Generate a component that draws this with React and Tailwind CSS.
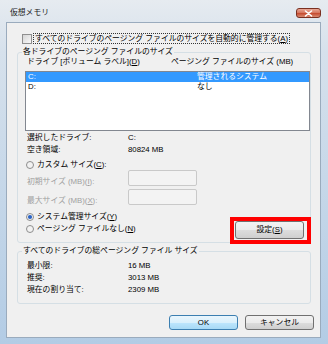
import React from 'react';

const Radio = ({ checked }) => (
  <svg width="8" height="8" viewBox="0 0 8 8" className="shrink-0">
    <circle cx="4" cy="4" r="3.5" fill="#f2f2f2" stroke="#8d8d8d" strokeWidth="1" />
    {checked && <circle cx="4" cy="4" r="2.1" fill="#2a63c4" />}
  </svg>
);

const U = ({ children }) => <span className="underline underline-offset-[1px]">{children}</span>;

const Button = ({ children, primary, className = '' }) => (
  <div
    className={`flex items-center justify-center w-[69px] rounded-[3px] border ${
      primary
        ? 'border-[#3c7fb1] bg-[linear-gradient(#eaf6fd,#d9f0fc_50%,#bee6fd_50%,#a7d9f5)]'
        : 'border-[#707070] bg-[linear-gradient(#f2f2f2,#ebebeb_50%,#dddddd_50%,#cfcfcf)]'
    } ${className}`}
  >
    {children}
  </div>
);

export default function App() {
  return (
    <div className="w-[328px] h-[344px] flex flex-col bg-[linear-gradient(180deg,#e6ebf0_0%,#d6e1ec_15%,#b3cce5_100%)] font-['Liberation_Sans','Noto_Sans_CJK_JP',sans-serif] text-[7.8px] text-black">
      {/* title bar */}
      <div className="h-[22px] flex items-start justify-between">
        <span className="pl-[10px] pt-[8px] leading-[10px] text-[#1b1b1b]">仮想メモリ</span>
        <div className="mt-[8px] mr-[7px] w-[25px] h-[10px] flex items-center justify-center rounded-[3px] border border-[#7a3021] bg-[linear-gradient(#e9a896,#d5735b_50%,#c4462a_50%,#d98a70)]">
          <svg width="9" height="7" viewBox="0 0 9 7">
            <path d="M1.5 1 L7.5 6 M7.5 1 L1.5 6" stroke="#fff" strokeWidth="1.6" strokeLinecap="round" />
          </svg>
        </div>
      </div>

      <div className="flex h-[316px]">
        <div className="w-[6px]" />
        <div className="w-[315px] h-[316px] border border-[#9aabbd] bg-[#f0f0f0] flex flex-col">
          {/* auto-manage checkbox */}
          <div className="ml-[15px] mt-[10px] flex items-center h-[11px]">
            <span className="w-[10px] h-[10px] border border-[#8f8f8f] bg-[linear-gradient(135deg,#d6d6d6,#f8f8f8)]" />
            <span className="ml-[1px] h-[11px] px-[1px] border border-dotted border-[#333] leading-[9px]">
              すべてのドライブのページング ファイルのサイズを自動的に管理する(<U>A</U>)
            </span>
          </div>

          {/* per-drive group */}
          <fieldset className="mt-[3px] ml-[10px] w-[294px] h-[196px] border border-[#d5dfe5] rounded-[3px]">
            <legend className="ml-[4px] px-[1px] leading-[10px]">各ドライブのページング ファイルのサイズ</legend>
            <div className="flex h-[10px] leading-[10px] ml-[9px]">
              <span className="w-[144px]">ドライブ [ボリューム ラベル](<U>D</U>)</span>
              <span>ページング ファイルのサイズ (MB)</span>
            </div>

            <div className="mt-[4px] ml-[7px] w-[285px] h-[60px] border border-[#828790] bg-white">
              <div className="flex h-[10px] leading-[10px] bg-[#3399ff] text-white pl-[2px]">
                <span className="w-[169px]">C:</span>
                <span>管理されるシステム</span>
              </div>
              <div className="flex h-[10px] leading-[10px] pl-[2px]">
                <span className="w-[169px]">D:</span>
                <span>なし</span>
              </div>
            </div>

            <div className="mt-[1px] ml-[9px] flex h-[12px] leading-[12px]">
              <span className="w-[101px]">選択したドライブ:</span>
              <span>C:</span>
            </div>
            <div className="ml-[9px] flex h-[12px] leading-[12px]">
              <span className="w-[101px]">空き領域:</span>
              <span>80824 MB</span>
            </div>

            <div className="mt-[4px] ml-[8px] flex items-center h-[10px] leading-[10px]">
              <Radio />
              <span className="ml-[3px]">カスタム サイズ(<U>C</U>):</span>
            </div>

            <div className="ml-[9px] flex items-start">
              <span className="w-[101px] mt-[7px] leading-[10px] text-[#a0a0a0]">初期サイズ (MB)(<U>I</U>):</span>
              <span className="w-[69px] h-[16px] rounded-[2px] border border-[#c9c9c9] bg-[#f3f3f3]" />
            </div>
            <div className="mt-[2px] ml-[9px] flex items-start">
              <span className="w-[101px] mt-[7px] leading-[10px] text-[#a0a0a0]">最大サイズ (MB)(<U>X</U>):</span>
              <span className="w-[69px] h-[16px] rounded-[2px] border border-[#c9c9c9] bg-[#f3f3f3]" />
            </div>

            <div className="mt-[6px] flex items-start justify-between">
              <div className="ml-[8px] flex flex-col gap-[2px]">
                <div className="flex items-center h-[10px] leading-[10px]">
                  <Radio checked />
                  <span className="ml-[3px]">システム管理サイズ(<U>Y</U>)</span>
                </div>
                <div className="flex items-center h-[10px] leading-[10px]">
                  <Radio />
                  <span className="ml-[3px]">ページング ファイルなし(<U>N</U>)</span>
                </div>
              </div>
              <div className="relative mt-[9px] mr-[6px]">
                <Button className="h-[18px]">設定(<U>S</U>)</Button>
                <div className="absolute -left-[5px] -top-[4px] -right-[7px] -bottom-[5px] border-[4px] border-[#ff0000]" />
              </div>
            </div>
          </fieldset>

          {/* total group */}
          <fieldset className="mt-[3px] ml-[10px] w-[294px] h-[58px] border border-[#d5dfe5] rounded-[3px]">
            <legend className="ml-[4px] px-[1px] leading-[10px]">すべてのドライブの総ページング ファイル サイズ</legend>
            <div className="mt-[4px] ml-[9px] flex h-[12px] leading-[12px]">
              <span className="w-[101px]">最小限:</span>
              <span>16 MB</span>
            </div>
            <div className="ml-[9px] flex h-[12px] leading-[12px]">
              <span className="w-[101px]">推奨:</span>
              <span>3013 MB</span>
            </div>
            <div className="ml-[9px] flex h-[12px] leading-[12px]">
              <span className="w-[101px]">現在の割り当て:</span>
              <span>2309 MB</span>
            </div>
          </fieldset>

          <div className="mt-[11px] mr-[6px] flex justify-end gap-[7px]">
            <Button primary className="h-[15px]">OK</Button>
            <Button className="h-[15px]">キャンセル</Button>
          </div>
        </div>
      </div>
    </div>
  );
}
